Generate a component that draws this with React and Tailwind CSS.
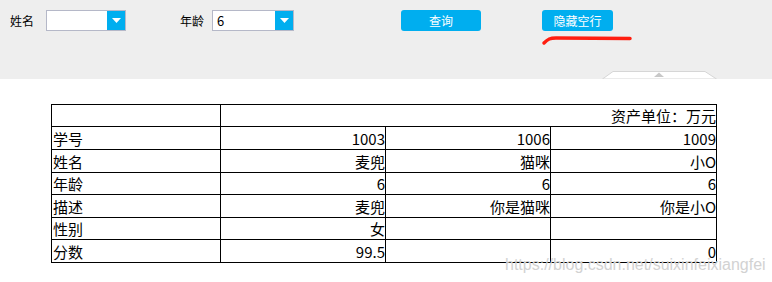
import React from "react";

const cjk = { fontFamily: '"Noto Sans CJK SC", "Noto Sans", sans-serif' };

const Select = ({ value, width }) => (
  <div className={`${width} h-[21px] border border-[#b5b8c8] bg-white flex`}>
    <div className="flex-1 pl-[4px] text-[13px] leading-[19px] text-black">{value}</div>
    <div className="w-[18px] h-full bg-[#00aeef] flex items-center justify-center">
      <svg width="9" height="5" viewBox="0 0 9 5">
        <polygon points="0,0 9,0 4.5,5" fill="#fff" />
      </svg>
    </div>
  </div>
);

const rows = [
  { label: "学号", h: "h-[23px]", cells: ["1003", "1006", "1009"] },
  { label: "姓名", h: "h-[23px]", cells: ["麦兜", "猫咪", "小O"] },
  { label: "年龄", h: "h-[22px]", cells: ["6", "6", "6"] },
  { label: "描述", h: "h-[23px]", cells: ["麦兜", "你是猫咪", "你是小O"] },
  { label: "性别", h: "h-[22px]", cells: ["女", "", ""] },
  { label: "分数", h: "h-[23px]", cells: ["99.5", "", "0"] },
];

export default function App() {
  return (
    <div className="relative w-[772px] h-[282px] bg-white overflow-hidden" style={cjk}>
      <div className="relative h-[79px] bg-[#eeeeee]">
        <div className="flex items-start pt-[10px]">
          <div className="pl-[10px] w-[46px] text-[12px] leading-[21px] text-black">姓名</div>
          <Select value="" width="w-[80px]" />
          <div className="ml-[54px] w-[32px] text-[12px] leading-[21px] text-black">年龄</div>
          <Select value="6" width="w-[82px]" />
          <button className="ml-[107px] w-[80px] h-[21px] rounded-[3px] bg-[#00aeef] text-white text-[12px] leading-[21px]">
            查询
          </button>
          <button className="ml-[61px] w-[71px] h-[21px] rounded-[3px] bg-[#00aeef] text-white text-[12px] leading-[21px]">
            隐藏空行
          </button>
        </div>
        <svg className="absolute left-[540px] top-[34px]" width="94" height="12" viewBox="0 0 94 12">
          <path d="M4 9 C8 5, 10 4, 16 4 L90 4.5" stroke="#ff1e10" strokeWidth="3.5" fill="none" strokeLinecap="round" />
        </svg>
        <svg className="absolute left-[602px] top-[71px]" width="115" height="8" viewBox="0 0 115 8">
          <polygon points="0.5,8 11,0.5 103,0.5 114.5,8" fill="#fff" stroke="#d6d6d6" />
          <polygon points="52,6 57,1.5 62,6" fill="#c8c8c8" />
        </svg>
      </div>

      <table className="ml-[51px] mt-[25px] border-collapse table-fixed w-[665px] text-[15px] text-black">
        <colgroup>
          <col className="w-[169px]" />
          <col className="w-[165px]" />
          <col className="w-[165px]" />
          <col className="w-[166px]" />
        </colgroup>
        <tbody>
          <tr className="h-[22px]">
            <td className="border border-black p-0"></td>
            <td colSpan={3} className="border border-black p-0 text-right leading-[20px] align-bottom">
              资产单位：万元
            </td>
          </tr>
          {rows.map((r) => (
            <tr key={r.label} className={r.h}>
              <td className="border border-black p-0 pl-[1px] text-left leading-[20px] align-bottom">{r.label}</td>
              {r.cells.map((c, i) => (
                <td key={i} className="border border-black p-0 text-right leading-[20px] align-bottom">
                  {c}
                </td>
              ))}
            </tr>
          ))}
        </tbody>
      </table>

      <div
        className="absolute left-[505px] top-[253px] text-[16px] text-[#d2d2d2] whitespace-nowrap"
        style={{ fontFamily: '"Liberation Sans", Arial, sans-serif' }}
      >
        https://blog.csdn.net/suixinfeixiangfei
      </div>
    </div>
  );
}
